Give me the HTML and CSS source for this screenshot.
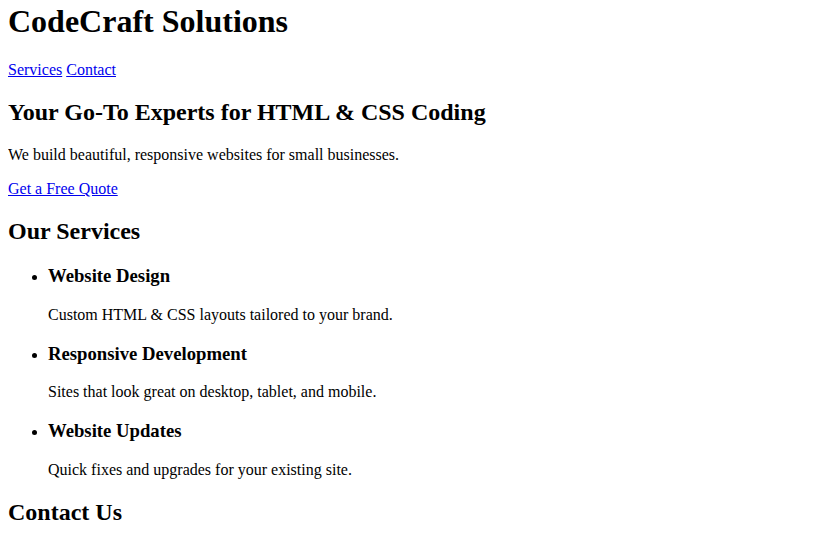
FILE: index.html
```html
<!DOCTYPE html>
<html lang="en">
<head>
<meta charset="utf-8">
<title>CodeCraft Solutions</title>
<link rel="stylesheet" href="styles.css">
</head>
<body>
<header class="site-header">
  <h1 class="brand">CodeCraft Solutions</h1>
  <nav class="nav"><a href="#services">Services</a> <a href="#contact">Contact</a></nav>
</header>
<section class="hero">
  <h2>Your Go-To Experts for HTML &amp; CSS Coding</h2>
  <p>We build beautiful, responsive websites for small businesses.</p>
  <a href="#contact">Get a Free Quote</a>
</section>
<section id="services" class="services">
  <h2>Our Services</h2>
  <ul>
    <li><h3>Website Design</h3><p>Custom HTML &amp; CSS layouts tailored to your brand.</p></li>
    <li><h3>Responsive Development</h3><p>Sites that look great on desktop, tablet, and mobile.</p></li>
    <li><h3>Website Updates</h3><p>Quick fixes and upgrades for your existing site.</p></li>
  </ul>
</section>
<section id="contact" class="contact">
  <h2>Contact Us</h2>
</section>
</body>
</html>
```
FILE: styles.css
```css
body {
  font-family: "Liberation Serif", "Times New Roman", serif;
  color: #000;
  background: #fff;
  margin: 3px 8px 8px;
}
.brand {
  margin-top: 0;
}
```
